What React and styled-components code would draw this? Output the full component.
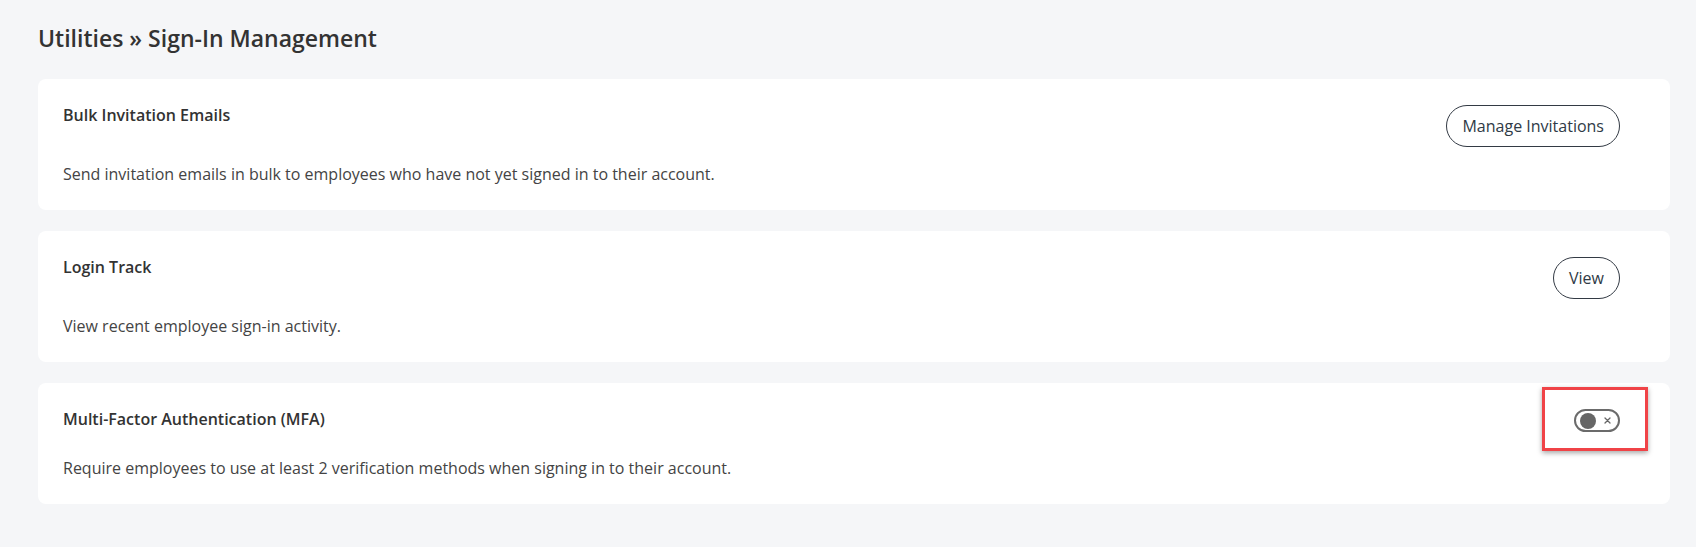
import React from 'react';
import styled, { createGlobalStyle } from 'styled-components';

const GlobalStyle = createGlobalStyle`
  html, body {
    margin: 0;
    padding: 0;
    background: #f5f6f8;
  }
  body {
    font-family: 'Open Sans', 'Liberation Sans', sans-serif;
    color: #333;
  }
`;

const Page = styled.div`
  min-height: 547px;
  padding: 22px 26px 0 38px;
  box-sizing: border-box;
  background: #f5f6f8;
`;

const Heading = styled.h1`
  margin: 0 0 25px 0;
  font-size: 23px;
  line-height: 32px;
  font-weight: 600;
  color: #333;
`;

const CardList = styled.div`
  display: flex;
  flex-direction: column;
  gap: 21px;
`;

const CardWrapper = styled.section`
  background: #fff;
  border-radius: 8px;
  padding: 24px 50px 24px 25px;
`;

const CardHeader = styled.div`
  display: flex;
  justify-content: space-between;
  align-items: flex-start;
`;

const CardTitle = styled.h2`
  margin: 0;
  font-size: 16px;
  line-height: 24px;
  font-weight: 600;
  color: #333;
`;

const CardText = styled.p`
  margin: 15px 0 0 0;
  font-size: 16px;
  line-height: 24px;
  color: #444;
`;

const PillButton = styled.button`
  margin-top: 2px;
  height: 42px;
  padding: 0 15px;
  border: 1px solid #333a44;
  border-radius: 21px;
  background: #fff;
  font-family: 'Open Sans', 'Liberation Sans', sans-serif;
  font-size: 16px;
  color: #2f3a46;
  cursor: pointer;
`;

const ToggleSlot = styled.div`
  position: relative;
  height: 34px;
  padding-top: 2px;
  box-sizing: border-box;
`;

// red annotation box drawn over the toggle
const Highlight = styled.div`
  position: absolute;
  left: -32px;
  top: -20px;
  width: 106px;
  height: 64px;
  box-sizing: border-box;
  border: 3px solid #f04347;
  box-shadow: 0 2px 5px rgba(0, 0, 0, 0.35);
  pointer-events: none;
`;

const ToggleTrack = styled.button`
  position: relative;
  width: 46px;
  height: 23px;
  padding: 0;
  box-sizing: border-box;
  border: 2px solid #6b6b6b;
  border-radius: 12px;
  background: #fff;
  cursor: pointer;
`;

const Knob = styled.span`
  position: absolute;
  left: 4px;
  top: 1.5px;
  width: 16px;
  height: 16px;
  border-radius: 50%;
  background: #666;
`;

const Cross = styled.svg`
  position: absolute;
  right: 7px;
  top: 6px;
`;

const Toggle = ({ checked }) => (
  <ToggleTrack role="switch" aria-checked={checked}>
    <Knob />
    <Cross width="7" height="7" viewBox="0 0 7 7">
      <path d="M1 1L6 6M6 1L1 6" stroke="#666" strokeWidth="1.3" strokeLinecap="round" />
    </Cross>
  </ToggleTrack>
);

const Card = ({ title, text, children }) => (
  <CardWrapper>
    <CardHeader>
      <CardTitle>{title}</CardTitle>
      {children}
    </CardHeader>
    <CardText>{text}</CardText>
  </CardWrapper>
);

export default function App() {
  return (
    <Page>
      <GlobalStyle />
      <Heading>Utilities » Sign-In Management</Heading>
      <CardList>
        <Card
          title="Bulk Invitation Emails"
          text="Send invitation emails in bulk to employees who have not yet signed in to their account."
        >
          <PillButton>Manage Invitations</PillButton>
        </Card>
        <Card title="Login Track" text="View recent employee sign-in activity.">
          <PillButton>View</PillButton>
        </Card>
        <Card
          title="Multi-Factor Authentication (MFA)"
          text="Require employees to use at least 2 verification methods when signing in to their account."
        >
          <ToggleSlot>
            <Toggle checked={false} />
            <Highlight />
          </ToggleSlot>
        </Card>
      </CardList>
    </Page>
  );
}
